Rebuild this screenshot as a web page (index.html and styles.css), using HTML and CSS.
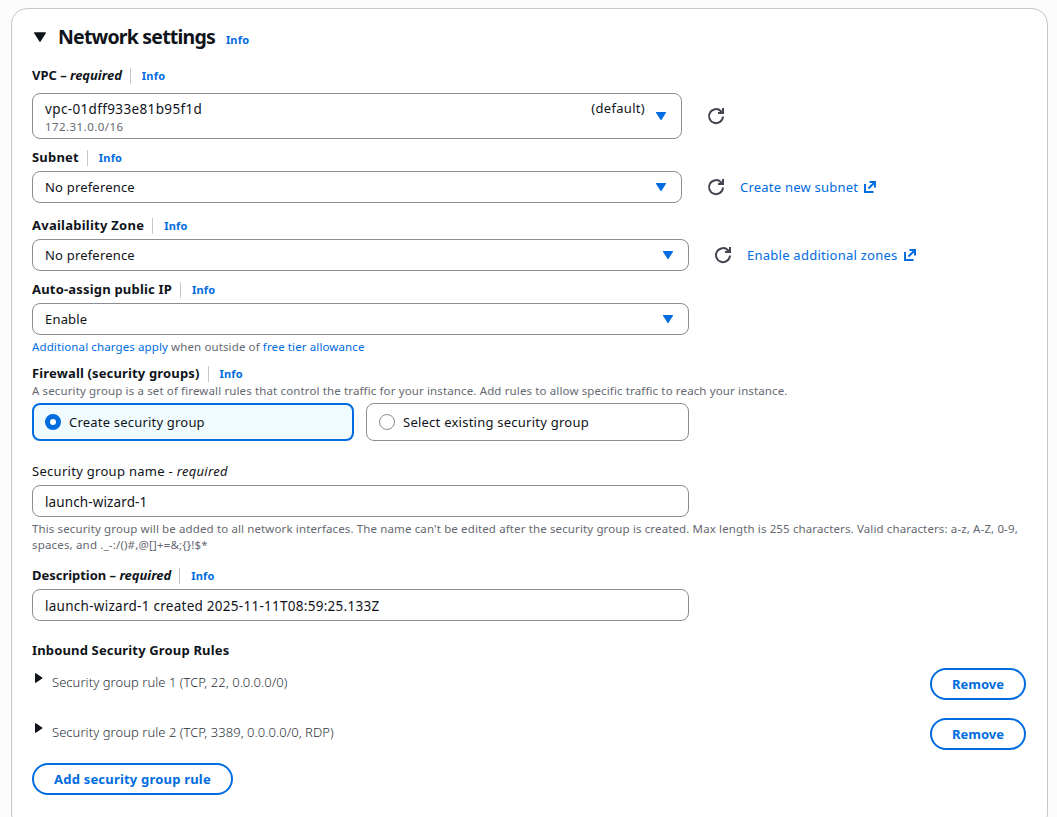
FILE: index.html
```
<!DOCTYPE html>
<html lang="en">
<head>
<meta charset="utf-8">
<title>Network settings</title>
<link rel="stylesheet" href="styles.css">
</head>
<body>
<svg class="defs" width="0" height="0">
  <symbol id="caret" viewBox="0 0 12 10"><path d="M1.500 1.500h9L6 8.500z" stroke="currentColor" stroke-width="1.200" stroke-linejoin="round" fill="currentColor"/></symbol>
  <symbol id="caret-right" viewBox="0 0 9 12"><path d="M1.500 1.500v9L8.200 6z" stroke="currentColor" stroke-width="1" stroke-linejoin="round" fill="currentColor"/></symbol>
  <symbol id="refresh" viewBox="0 0 18 18"><path d="M16 9.500A7 7 0 1 1 14 4.200L15.500 5.600M16 1v5h-5" fill="none" stroke="currentColor" stroke-width="2"/></symbol>
  <symbol id="external" viewBox="0 0 14 14"><path d="M2 4V12h8.500M6.500 2H12v5.500M12 2L5.500 8.500" fill="none" stroke="currentColor" stroke-width="2"/></symbol>
</svg>
<main class="card">
  <h2 class="title"><svg class="title-caret"><use href="#caret"/></svg><span class="title-text">Network settings</span><a class="info">Info</a></h2>

  <div class="label vpc-label"><b class="with-note">VPC – <i>required</i></b><a class="info ruled">Info</a></div>
  <div class="line">
    <div class="field narrow tall">
      <div class="option"><span class="vpc-id">vpc-01dff933e81b95f1d</span><small>172.31.0.0/16</small></div>
      <span class="tag">(default)</span><svg class="caret"><use href="#caret"/></svg>
    </div>
    <svg class="refresh"><use href="#refresh"/></svg>
  </div>

  <div class="label subnet-label"><b>Subnet</b><a class="info ruled">Info</a></div>
  <div class="line">
    <div class="field narrow"><span>No preference</span><svg class="caret"><use href="#caret"/></svg></div>
    <svg class="refresh"><use href="#refresh"/></svg>
    <a class="link"><span>Create new subnet</span><svg class="external"><use href="#external"/></svg></a>
  </div>

  <div class="label zone-label"><b>Availability Zone</b><a class="info ruled">Info</a></div>
  <div class="line">
    <div class="field"><span>No preference</span><svg class="caret"><use href="#caret"/></svg></div>
    <svg class="refresh"><use href="#refresh"/></svg>
    <a class="link zones"><span>Enable additional zones</span><svg class="external"><use href="#external"/></svg></a>
  </div>

  <div class="label ip-label"><b>Auto-assign public IP</b><a class="info ruled">Info</a></div>
  <div class="field"><span>Enable</span><svg class="caret"><use href="#caret"/></svg></div>
  <p class="hint charges"><a>Additional charges apply</a> when outside of <a>free tier allowance</a></p>

  <div class="label firewall-label"><b>Firewall (security groups)</b><a class="info ruled">Info</a></div>
  <p class="hint description">A security group is a set of firewall rules that control the traffic for your instance. Add rules to allow specific traffic to reach your instance.</p>
  <div class="tiles">
    <div class="tile selected"><span class="radio"></span><span>Create security group</span></div>
    <div class="tile existing"><span class="radio"></span><span>Select existing security group</span></div>
  </div>

  <div class="label name-label"><span>Security group name - <i>required</i></span></div>
  <div class="field input"><span class="name-value">launch-wizard-1</span></div>
  <p class="hint"><span>This security group will be added to all network interfaces. The name can't be edited after the security group is created. Max length is 255 characters. Valid characters: a-z, A-Z, 0-9,</span><br><span class="symbols">spaces, and ._-:/()#,@[]+=&amp;;{}!$*</span></p>

  <div class="label desc-label"><b class="with-note">Description – <i>required</i></b><a class="info ruled">Info</a></div>
  <div class="field input"><span class="desc-value">launch-wizard-1 created 2025-11-11T08:59:25.133Z</span></div>

  <div class="label rules-label"><b>Inbound Security Group Rules</b></div>
  <div class="rule first"><svg class="rule-caret"><use href="#caret-right"/></svg><span class="rule-text">Security group rule 1 (TCP, 22, 0.0.0.0/0)</span><button class="button">Remove</button></div>
  <div class="rule"><svg class="rule-caret"><use href="#caret-right"/></svg><span class="rule-text">Security group rule 2 (TCP, 3389, 0.0.0.0/0, RDP)</span><button class="button">Remove</button></div>
  <button class="button add">Add security group rule</button>
</main>
</body>
</html>
```
FILE: styles.css
```
* { box-sizing: border-box; }
html, body { height: 100%; overflow: hidden; }
body { margin: 0; padding: 8px 9px 0 11px; background: #fcfcfd; color: #0f141a; font: 13px/20px "Noto Sans", "Open Sans", sans-serif; }
.defs { position: absolute; }
svg { display: block; flex: none; }
span, b, a { white-space: nowrap; }
.card { height: 822px; border: 1px solid #c6c6cd; border-radius: 16px; background: #fff; padding: 14px 21px 0 20px; }

.title { display: flex; align-items: center; height: 28px; margin: 0; font-size: 20px; line-height: 28px; font-weight: 700; }
.title-text { font-size: 19.500px; letter-spacing: -0.800px; }
.title-caret { width: 14px; height: 12px; margin: 0 11px 0 1px; }
.title .info { margin: 6px 0 0 11px; }
.info { color: #006ce0; font-size: 11px; line-height: 16px; font-weight: 700; letter-spacing: 0.2px; }
.label { display: flex; align-items: center; height: 20px; margin-bottom: 3px; }
.label b { padding-bottom: 2px; letter-spacing: 0.190px; }
.label .with-note { letter-spacing: -0.030px; }
.info.ruled { border-left: 1px solid #c6c6cd; margin-left: 8px; padding-left: 11px; }
.vpc-label { margin: 15px 0 7px; }
.subnet-label, .ip-label { margin-top: 9px; }
.zone-label { margin-top: 13px; }
.zone-label b { letter-spacing: 0.250px; }
.firewall-label { margin: 9px 0 0; }
.firewall-label b { letter-spacing: 0.150px; }
.name-label { margin: 20px 0 4px; letter-spacing: 0.290px; }
.desc-label { margin-top: 13px; }
.rules-label { margin: 19px 0 8px; }
.rules-label b { padding: 0; letter-spacing: 0.160px; }

.line { display: flex; align-items: center; }
.field { display: flex; align-items: center; width: 657px; height: 32px; padding: 0 14px 0 12px; border: 1px solid #8c8c94; border-radius: 8px; letter-spacing: 0.190px; }
.field.narrow { width: 650px; }
.field.tall { height: 46px; }
.field.input { padding-top: 2px; }
.name-value { font-size: 13.500px; letter-spacing: 0.120px; }
.desc-value { font-size: 13.500px; letter-spacing: 0.270px; }
.caret { width: 12px; height: 10px; margin-left: auto; color: #006ce0; }
.option { display: flex; flex-direction: column; padding-top: 2px; }
.option .vpc-id { font-size: 13.500px; line-height: 18px; letter-spacing: 0.360px; }
.option small { font-size: 11.500px; line-height: 17px; letter-spacing: 0.440px; color: #656871; }
.tag { margin-left: auto; align-self: flex-start; line-height: 18px; padding-top: 5px; letter-spacing: 0.300px; }
.tag + .caret { margin-left: 10px; }
.refresh { width: 18px; height: 18px; margin-left: 25px; color: #424650; }
.link { display: flex; align-items: center; margin-left: 15px; color: #006ce0; letter-spacing: 0.220px; }
.link.zones { letter-spacing: 0.250px; }
.external { width: 14px; height: 14px; margin-left: 5px; }
.hint { margin: 4px 0 0; font-size: 11.500px; line-height: 16px; color: #656871; letter-spacing: 0.125px; }
.hint a { color: #006ce0; }
.charges { letter-spacing: 0.115px; }
.description { margin-top: -1px; letter-spacing: 0.130px; }
.symbols { letter-spacing: 0.170px; }

.tiles { display: grid; grid-template-columns: 322px 323px; gap: 12px; margin-top: 4px; letter-spacing: 0.200px; }
.tile { display: flex; align-items: center; gap: 8px; height: 38px; padding: 0 12px; border: 1px solid #8c8c94; border-radius: 8px; }
.tile.selected { border: 2px solid #006ce0; background: #f0fbff; padding: 0 11px; }
.tile.existing { letter-spacing: 0.240px; }
.radio { width: 16px; height: 16px; border: 1px solid #8c8c94; border-radius: 50%; background: #fff; }
.selected .radio { border: 5px solid #006ce0; }

.rule { display: flex; align-items: center; height: 32px; margin-top: 18px; }
.rule.first { margin-top: 0; }
.rule-caret { width: 9px; height: 12px; margin: -12px 9px 0 2px; }
.rule-text { color: #2b2f38; font-weight: 300; margin-top: -5px; letter-spacing: 0.050px; }
.button { height: 32px; padding: 0 18px; border: 2px solid #006ce0; border-radius: 16px; background: #fff; color: #006ce0; font: inherit; font-weight: 700; }
.rule .button { width: 96px; margin-left: auto; }
.add { display: block; width: 201px; margin-top: 13px; letter-spacing: 0.200px; }
```
